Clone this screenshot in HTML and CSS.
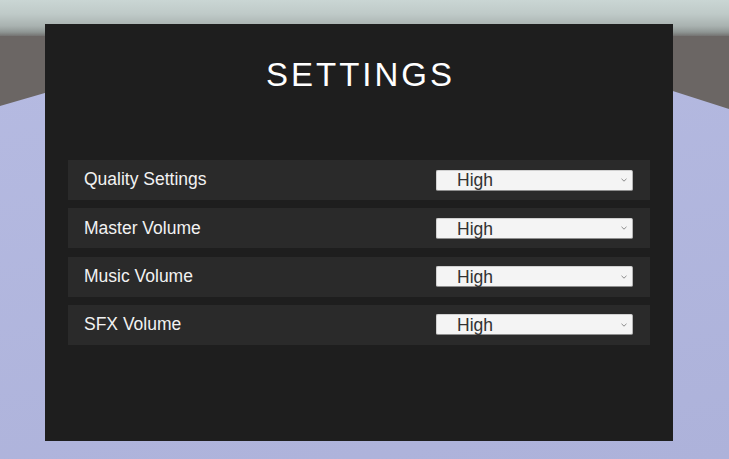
FILE: index.html
```html
<!DOCTYPE html>
<html lang="en">
<head>
<meta charset="utf-8">
<title>Settings</title>
<link rel="stylesheet" href="styles.css">
</head>
<body>
<div class="scene">
  <div class="sky"></div>
  <div class="floor"></div>
  <main class="panel">
    <h1 class="title">SETTINGS</h1>
    <div class="rows">
      <div class="row">
        <span class="label">Quality Settings</span>
        <div class="select"><span class="value">High</span><svg class="chev" width="6" height="4" viewBox="0 0 6 4"><path d="M0.5 0.8 L3 3.2 L5.5 0.8" fill="none" stroke="#8a8a8a" stroke-width="1"/></svg></div>
      </div>
      <div class="row">
        <span class="label">Master Volume</span>
        <div class="select"><span class="value">High</span><svg class="chev" width="6" height="4" viewBox="0 0 6 4"><path d="M0.5 0.8 L3 3.2 L5.5 0.8" fill="none" stroke="#8a8a8a" stroke-width="1"/></svg></div>
      </div>
      <div class="row">
        <span class="label">Music Volume</span>
        <div class="select"><span class="value">High</span><svg class="chev" width="6" height="4" viewBox="0 0 6 4"><path d="M0.5 0.8 L3 3.2 L5.5 0.8" fill="none" stroke="#8a8a8a" stroke-width="1"/></svg></div>
      </div>
      <div class="row">
        <span class="label">SFX Volume</span>
        <div class="select"><span class="value">High</span><svg class="chev" width="6" height="4" viewBox="0 0 6 4"><path d="M0.5 0.8 L3 3.2 L5.5 0.8" fill="none" stroke="#8a8a8a" stroke-width="1"/></svg></div>
      </div>
    </div>
  </main>
</div>
</body>
</html>
```
FILE: styles.css
```css
* { box-sizing: border-box; }
html, body { margin: 0; padding: 0; }
body {
  width: 729px;
  height: 459px;
  overflow: hidden;
  font-family: "Liberation Sans", Arial, sans-serif;
  background: #6b6664;
}
.scene {
  position: relative;
  width: 729px;
  height: 459px;
  padding: 24px 0 0 45px;
  background: #6b6664;
}
.sky {
  position: absolute;
  left: 0; top: 0;
  width: 729px;
  height: 36px;
  background: linear-gradient(to bottom, #cad6d4 0px, #bfcac8 14px, #a9b2b0 26px, #8f9694 32px, #747372 36px);
}
.floor {
  position: absolute;
  left: 0; top: 0;
  width: 729px;
  height: 459px;
  background: linear-gradient(170deg, #b6bbe2 0%, #adb2da 100%);
  clip-path: polygon(0 106px, 100px 77px, 629px 77px, 729px 109px, 729px 459px, 0 459px);
}
.panel {
  position: relative;
  width: 628px;
  height: 417px;
  background: #1e1e1e;
  padding: 34px 23px 0 23px;
  display: flex;
  flex-direction: column;
}
.title {
  margin: 0;
  font-weight: normal;
  font-size: 33px;
  line-height: 33px;
  color: #ffffff;
  text-align: center;
  letter-spacing: 3px;
  padding-left: 3px;
}
.rows {
  margin-top: 69px;
  display: flex;
  flex-direction: column;
  gap: 8.34px;
}
.row {
  height: 40px;
  background: #2a2a2a;
  display: flex;
  align-items: center;
  justify-content: space-between;
  padding: 0 17px 0 16px;
}
.label {
  font-size: 17.5px;
  line-height: 17.5px;
  color: #f2f2f2;
}
.select {
  width: 197px;
  height: 21px;
  background: #f4f4f4;
  border: 1px solid #d0d0d0;
  border-bottom-color: #8e8e8e;
  border-right-color: #b4b4b4;
  border-radius: 2px;
  display: flex;
  align-items: center;
  justify-content: space-between;
  padding: 0 5px 0 20px;
}
.value {
  font-size: 17.5px;
  line-height: 17.5px;
  color: #323232;
  margin-top: 2px;
}
.chev { display: block; }
```
